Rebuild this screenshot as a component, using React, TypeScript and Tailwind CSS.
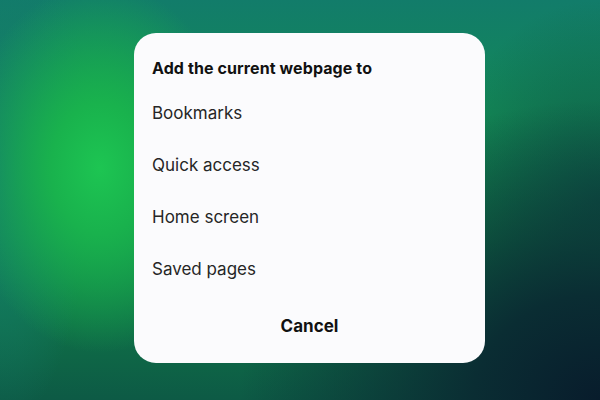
import React from 'react';

const options = ['Bookmarks', 'Quick access', 'Home screen', 'Saved pages'];

const App: React.FC = () => {
  return (
    <div
      className="w-[600px] h-[400px] overflow-hidden flex items-center justify-center pl-[19px] pb-[4px] bg-[radial-gradient(ellipse_140px_185px_at_100px_168px,#1dc552_0%,#19b24d_35%,rgba(24,160,74,0)_100%),radial-gradient(ellipse_90px_260px_at_0px_170px,#147a6c_0%,rgba(20,122,108,0)_100%),radial-gradient(ellipse_360px_300px_at_600px_400px,#081c2c_0%,#0a2d33_35%,rgba(10,60,60,0)_100%),radial-gradient(ellipse_160px_200px_at_600px_200px,#0e5a48_0%,rgba(14,90,72,0)_100%),linear-gradient(180deg,#127c6a_0%,#138a55_30%,#11864a_60%,#0d5a45_100%)]"
      style={{ fontFamily: 'Inter, "Noto Sans", sans-serif' }}
    >
      <div className="w-[351px] h-[330px] rounded-[22px] bg-[#fbfbfd] flex flex-col pt-[25px] pb-[14px]">
        <h2 className="px-[18px] text-[16px] leading-[20px] font-bold tracking-[0.1px] text-[#111111]">
          Add the current webpage to
        </h2>
        <ul className="mt-[10px] flex flex-col">
          {options.map(opt => (
            <li key={opt} className="h-[52px] flex items-center px-[18px] text-[17px] text-[#262626]">
              {opt}
            </li>
          ))}
        </ul>
        <button className="mt-auto h-[44px] flex items-center justify-center text-[17px] font-bold text-[#111111]">
          Cancel
        </button>
      </div>
    </div>
  );
};

export default App;
